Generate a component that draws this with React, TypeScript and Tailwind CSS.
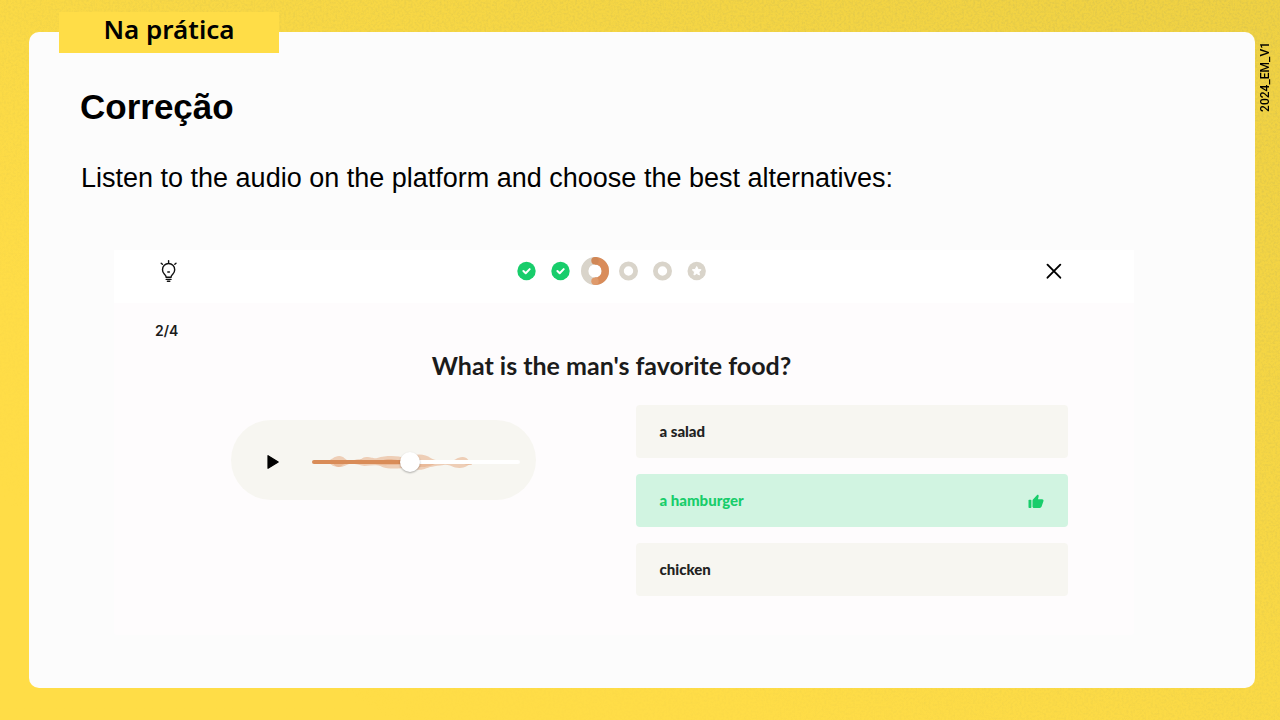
import { useState } from "react";

type Step = "done" | "current" | "todo" | "final";

const steps: Step[] = ["done", "done", "current", "todo", "todo", "final"];
const answers = ["a salad", "a hamburger", "chicken"];
const correctAnswer = "a hamburger";

function Grain() {
  return (
    <svg aria-hidden="true" className="pointer-events-none absolute inset-0 h-full w-full">
      <defs>
        <filter id="grain" x="0" y="0" width="100%" height="100%">
          <feTurbulence type="fractalNoise" baseFrequency="0.45" numOctaves="2" seed="4" />
          <feColorMatrix values="0 0 0 0 0.65  0 0 0 0 0.52  0 0 0 0 0.08  1.4 0 0 0 -0.58" />
        </filter>
        <linearGradient id="grainFade" x1="0" y1="1" x2="1" y2="0">
          <stop offset="0.15" stopColor="#000" />
          <stop offset="1" stopColor="#fff" />
        </linearGradient>
        <mask id="grainMask">
          <rect width="100%" height="100%" fill="url(#grainFade)" />
        </mask>
      </defs>
      <g mask="url(#grainMask)">
        <rect width="100%" height="100%" filter="url(#grain)" />
      </g>
    </svg>
  );
}

function BulbIcon() {
  return (
    <svg viewBox="0 0 28 28" className="h-7 w-7" fill="none" stroke="#111" strokeWidth="1.4" strokeLinecap="round" aria-hidden="true">
      <path d="M11.200 20.200c-.1-1.500-.9-2.200-1.900-3.200a6.100 6.100 0 1 1 8.600 0c-1 1-1.800 1.700-1.900 3.200z" />
      <path d="M11.200 22.400h4.800M12.400 24.300h2.400M12.800 15h1.600" />
      <path d="M13.600 3.600v1.900M6.200 6.200l1.200 1.100M21 6.200l-1.200 1.100" />
    </svg>
  );
}

function StepIcon({ step }: { step: Step }) {
  return (
    <svg viewBox="0 0 28 28" className="h-7 w-7" fill="none" aria-hidden="true">
      {step === "done" && (
        <>
          <circle cx="13.500" cy="14" r="9.200" fill="#18cd6b" />
          <path d="M10.400 14l2.300 2.200 4-4.100" stroke="#fff" strokeWidth="2" strokeLinecap="round" strokeLinejoin="round" />
        </>
      )}
      {step === "current" && (
        <>
          <circle cx="14" cy="14" r="10.300" stroke="#d9d4ca" strokeWidth="7.400" />
          <path d="M14 3.700a10.300 10.300 0 0 1 0 20.600" stroke="#d98c5a" strokeWidth="7.400" />
          <circle cx="14" cy="3.700" r="3.700" fill="#d08756" />
          <circle cx="14" cy="24.300" r="3.700" fill="#df9a6b" />
        </>
      )}
      {step === "todo" && <circle cx="13.500" cy="14" r="7.100" stroke="#d9d4ca" strokeWidth="4.800" />}
      {step === "final" && (
        <>
          <circle cx="13.700" cy="14" r="9.200" fill="#d9d4ca" />
          <path
            d="M13.700 9.500l1.350 2.850 3.100.4-2.270 2.150.57 3.100-2.750-1.500-2.750 1.500.57-3.100-2.270-2.150 3.100-.4z"
            fill="#fff"
            stroke="#fff"
            strokeWidth="1"
            strokeLinejoin="round"
          />
        </>
      )}
    </svg>
  );
}

function ThumbIcon() {
  return (
    <svg viewBox="0 0 16 16" className="h-4 w-4" fill="#18cd6b" aria-hidden="true">
      <rect x="0.500" y="6.700" width="2.900" height="8.300" rx="0.800" />
      <path d="M4.500 7.700c0-.5.200-.9.500-1.200L9.100 2.100c.4-.4 1.100-.3 1.400.2.200.3.200.7.100 1.100L10 6.200h4.100c1 0 1.700 1 1.400 1.900l-1.900 5.500c-.3.900-1 1.400-1.900 1.400H6c-.8 0-1.500-.7-1.500-1.500z" />
    </svg>
  );
}

function AudioPlayer() {
  const [position, setPosition] = useState(47);
  return (
    <div className="flex h-20 w-[305px] items-center rounded-full bg-[#f7f6f1] pr-4 pl-7">
      <button type="button" aria-label="Play" className="flex h-7 w-7 items-center justify-center pt-1">
        <svg viewBox="0 0 12 16" className="h-4 w-3" aria-hidden="true">
          <path d="M1 1.700L11.200 8 1 14.300z" fill="#000" stroke="#000" strokeWidth="1.200" strokeLinejoin="round" />
        </svg>
      </button>
      <div className="ml-[25px] grid flex-1 items-center pt-1">
        <svg viewBox="0 0 207 20" preserveAspectRatio="none" className="col-start-1 row-start-1 h-5 w-full" aria-hidden="true">
          <g fill="#e6a67c" fillOpacity="0.5">
            <path d="M14 9.500C20 8 22 4 27 4s6 4 10 5h8c4-1 5-4 9-4 6 0 7 2 11 1 10-3 22-2 27 0h5c5-5 16-4 21 0 5 3 12 3 18 4 6-1 8-5 14-5 5 0 5 4 9 5v2c-5 1-6 4-12 4-8 0-9-4-16-3-10 1-14 2-19 4-8 2-12 0-16-2-10 2-20 2-26 0-6-3-12-1-18-1-6-1-10-3-15-2-4 1-5 3-10 3-8 0-8-4-13-5.500z" />
            <path d="M20 10c4-2 7-2 10 1 3 2 5 0 8-1 5-3 9-4 15-1 10 4 15-1 23-2 10 0 14 4 22 2 8-3 14 0 20 1 10 2 16 0 24 1 6 0 10-2 17-2v4c-8 0-12-3-18-3-8 0-15 0-21 3-8 3-14 2-19 1-8-2-14-1-24-1-12 1-18-3-27-3-6 0-8 1-12 1-5-1-8 4-12 4-4-1-4-3-6-5z" />
          </g>
        </svg>
        <input
          type="range"
          aria-label="Audio position"
          min={0}
          max={100}
          value={position}
          onChange={(event) => setPosition(Number(event.target.value))}
          style={{ backgroundSize: `${position}% 100%, 100% 100%` }}
          className="col-start-1 row-start-1 h-1 w-full cursor-pointer appearance-none rounded-full bg-[linear-gradient(#d98c58,#d98c58),linear-gradient(#fff,#fff)] bg-no-repeat [&::-webkit-slider-thumb]:h-5 [&::-webkit-slider-thumb]:w-5 [&::-webkit-slider-thumb]:appearance-none [&::-webkit-slider-thumb]:rounded-full [&::-webkit-slider-thumb]:bg-white [&::-webkit-slider-thumb]:shadow-[0_1px_2px_rgba(0,0,0,0.3)]"
        />
      </div>
    </div>
  );
}

function Answer({ label }: { label: string }) {
  const correct = label === correctAnswer;
  const tone = correct ? "bg-[#d1f4e1] text-[#18cd6b]" : "bg-[#f7f6f1] text-[#222]";
  return (
    <button
      type="button"
      aria-pressed={correct}
      className={`flex h-[53px] w-full items-center justify-between rounded px-6 text-left text-[15px] font-black ${tone}`}
    >
      {label}
      {correct && <ThumbIcon />}
    </button>
  );
}

function Quiz() {
  return (
    <section aria-label="Quiz" className="mt-14 mr-[121px] ml-[85px] rounded bg-[#fefcfd] pb-[39px] font-['Lato',sans-serif] text-[#1b1b1b]">
      <header className="flex h-[53px] items-start justify-between bg-white pt-[7px] pr-[66px] pl-[41px]">
        <button type="button" aria-label="Hint">
          <BulbIcon />
        </button>
        <ol className="flex gap-1.5" aria-label="Progress">
          {steps.map((step, index) => (
            <li key={index}>
              <StepIcon step={step} />
            </li>
          ))}
        </ol>
        <button type="button" aria-label="Close">
          <svg viewBox="0 0 28 28" className="h-7 w-7" stroke="#000" strokeWidth="1.900" strokeLinecap="round" aria-hidden="true">
            <path d="M7.500 7.700l12.800 13M20.300 7.700l-12.800 13" />
          </svg>
        </button>
      </header>
      <div className="pt-[18px] pr-[66px] pl-[41px]">
        <p className="font-['Inter',sans-serif] text-[14px] leading-5 font-semibold">2/4</p>
        <h2 className="mt-2 text-center text-[25px] leading-8 font-bold">What is the man's favorite food?</h2>
        <div className="mt-6 grid grid-cols-[19fr_18fr] gap-6">
          <div className="flex justify-center pt-[15px]">
            <AudioPlayer />
          </div>
          <ul className="flex flex-col gap-4">
            {answers.map((answer) => (
              <li key={answer}>
                <Answer label={answer} />
              </li>
            ))}
          </ul>
        </div>
      </div>
    </section>
  );
}

export default function App() {
  return (
    <div className="relative flex min-h-screen flex-col bg-linear-to-tr from-[#ffdd47] from-30% to-[#efd143] pt-3 pb-8 font-['Liberation_Sans',sans-serif] text-black">
      <Grain />
      <div className="relative z-10 ml-[59px] flex h-[41px] w-[220px] items-center justify-center bg-[#ffdd47] pb-1.5 font-['Noto_Sans',sans-serif] text-[26px] font-semibold">
        Na prática
      </div>
      <div className="relative -mt-[21px] flex flex-1">
        <main className="ml-[29px] flex-1 rounded-[10px] bg-[#fcfcfc]">
          <h1 className="pt-[54px] pl-[51px] text-[35px] leading-[42px] font-bold">Correção</h1>
          <p className="mt-[34px] pl-[52px] text-[27px] leading-8">
            Listen to the audio on the platform and choose the best alternatives:
          </p>
          <Quiz />
        </main>
        <aside className="flex w-[25px] pt-[10px]">
          <span className="h-fit rotate-180 font-['Roboto',sans-serif] text-[12px] leading-5 font-medium [writing-mode:vertical-rl]">
            2024_EM_V1
          </span>
        </aside>
      </div>
    </div>
  );
}
